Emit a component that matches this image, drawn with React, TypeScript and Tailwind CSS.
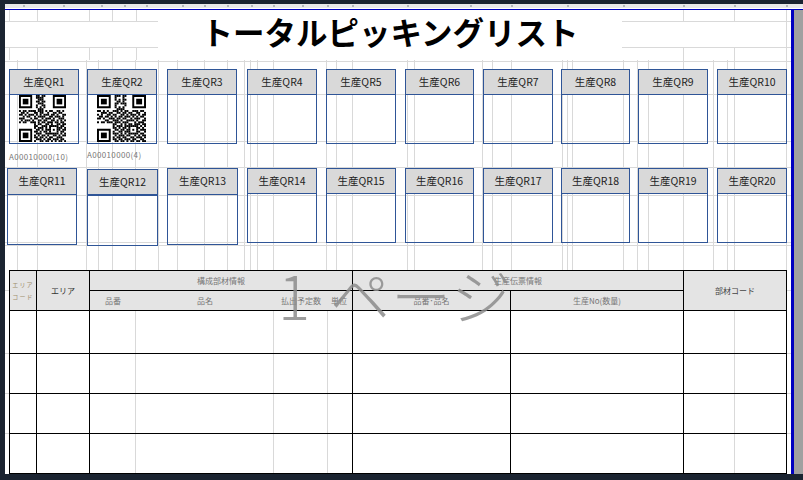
const GRID_TOP_X = [9, 37, 89, 112, 136, 683, 734];
const GRID_UPPER_X = [17, 37, 86, 98, 112, 135, 158, 177, 204, 227, 244, 250, 257, 273, 326, 336, 352, 407, 414, 482, 492, 511, 562, 567, 572, 623, 637, 648, 683, 713, 727, 734, 786];
const GRID_LOWER_X = [135, 273, 327, 734];
const GRID_UPPER_Y = [61, 94, 141, 167, 195, 242, 245];
const GRID_SIDE_Y = [290, 353, 393, 433];
const RULER_TICKS = [23, 63, 101, 124, 146, 182, 204, 227, 251, 273, 302, 327, 352, 407, 470, 511, 567, 623, 683, 734, 786];

const QR1 = [
  "0000000001101100000000000",
  "0000000001111000000000000",
  "0000000000111000000000000",
  "0000000001101100000000000",
  "0000000000111000000000000",
  "0000000001001100000000000",
  "0000000001010100000000000",
  "0000000000111000000000000",
  "1011011110111010110011010",
  "0110100011011001001101100",
  "1101011101010111011010011",
  "0010110010111100110111010",
  "1110001011001011101001110",
  "0101110100110110011010101",
  "1011001110101101110110110",
  "0000000010110011010011011",
  "0000000011001110111110110",
  "0000000010111010100011101",
  "0000000001101011101011011",
  "0000000011010110100010110",
  "0000000001110011111110101",
  "0000000010101101001101011",
  "0000000011011010110011100",
  "0000000001110101101110110",
  "0000000010011011010101101",
];

const QR2 = [
  "0000000001110110000000000",
  "0000000001000100000000000",
  "0000000001010110000000000",
  "0000000000110100000000000",
  "0000000001101110000000000",
  "0000000001000010000000000",
  "0000000001010100000000000",
  "0000000000111100000000000",
  "1101010011101011001110110",
  "0011101100110110110011001",
  "1010011011001101011101011",
  "0110110101011011101010110",
  "1101001110110110010111001",
  "0000110011101001111010011",
  "1011011101110111000101110",
  "0000000011001010110111011",
  "0000000010111011111110101",
  "0000000011010110100011010",
  "0000000001101101101010111",
  "0000000010011011100011001",
  "0000000011101010111110110",
  "0000000001011101100101011",
  "0000000010110110011011101",
  "0000000011011011101100110",
  "0000000001101101011011011",
];

const CARD_COLS = "grid-cols-[78px_80px_80px_79px_79px_78px_78px_77px_79px_69px]";

function Finder({ x, y }: { x: number; y: number }) {
  return (
    <g>
      <path d={`M${x} ${y}h7v7h-7z M${x + 1} ${y + 1}v5h5v-5z`} fillRule="evenodd" fill="#000" />
      <rect x={x + 2} y={y + 2} width="3" height="3" fill="#000" />
    </g>
  );
}

function QrCode({ rows, className }: { rows: string[]; className: string }) {
  return (
    <svg viewBox="0 0 25 25" preserveAspectRatio="none" className={className}>
      <rect width="25" height="25" fill="#fff" />
      {rows.map((row, y) =>
        row.split("").map((c, x) => (c === "1" ? <rect key={`${x}-${y}`} x={x} y={y} width="1.02" height="1.02" fill="#000" /> : null)),
      )}
      <Finder x={0} y={0} />
      <Finder x={18} y={0} />
      <Finder x={0} y={18} />
    </svg>
  );
}

function Card({
  label,
  className = "h-[75px] w-[70px]",
  headerClass = "h-[25px] border-b",
  children,
}: {
  label: string;
  className?: string;
  headerClass?: string;
  children?: React.ReactNode;
}) {
  return (
    <div className={`flex flex-col border border-[#2f5597] ${className}`}>
      <div className={`flex items-center justify-center border-[#2f5597] bg-[#d9d9d9] pb-[1px] text-[10.5px] text-[#222] ${headerClass}`}>
        {label}
      </div>
      {children}
    </div>
  );
}

function Gridlines() {
  return (
    <svg className="absolute left-0 top-0 h-[464px] w-[786px]" viewBox="5 10 786 464" stroke="#d9d9d9" strokeWidth="1">
      {GRID_TOP_X.map((x) => (
        <g key={`t${x}`}>
          <line x1={x + 0.5} x2={x + 0.5} y1="10" y2="21" />
          <line x1={x + 0.5} x2={x + 0.5} y1="47" y2="60" />
        </g>
      ))}
      <line x1="786.5" x2="786.5" y1="10" y2="60" />
      {GRID_UPPER_X.map((x) => (
        <line key={`u${x}`} x1={x + 0.5} x2={x + 0.5} y1="60" y2="270" />
      ))}
      {GRID_LOWER_X.map((x) => (
        <line key={`l${x}`} x1={x + 0.5} x2={x + 0.5} y1="310" y2="474" />
      ))}
      <line x1="5" x2="791" y1="21.5" y2="21.5" />
      <line x1="5" x2="791" y1="47.5" y2="47.5" />
      {GRID_UPPER_Y.map((y) => (
        <line key={`h${y}`} x1="5" x2="791" y1={y + 0.5} y2={y + 0.5} />
      ))}
      {GRID_SIDE_Y.map((y) => (
        <line key={`s${y}`} x1="5" x2="791" y1={y + 0.5} y2={y + 0.5} />
      ))}
    </svg>
  );
}

export default function App() {
  const cell = "border border-black p-0";
  const head = "border border-black bg-[#e4e4e4] p-0 text-center font-normal";
  const small = "text-[8px] leading-none text-[#777]";

  return (
    <div className="flex h-[480px] w-[803px] flex-col overflow-hidden bg-[#1b2431] font-['Noto_Sans_CJK_JP',sans-serif]">
      <div className="mt-[4px] ml-[5px] flex h-[6px] flex-col">
        <svg className="h-[4px] w-[798px] bg-[#e9e9e9]" viewBox="5 0 798 4">
          {RULER_TICKS.map((x) => (
            <rect key={x} x={x} y="1" width="2" height="2" fill="#b4b8bc" />
          ))}
        </svg>
        <div className="h-[1px] bg-white" />
        <div className="h-[1px] bg-[#0000c0]" />
      </div>

      <div className="ml-[5px] flex h-[464px]">
        <div className="relative h-[464px] w-[786px] overflow-hidden bg-white">
          <Gridlines />

          <div className="relative flex h-[464px] flex-col">
            <div className="flex h-[50px] pl-[153px]">
              <h1 className="flex h-[50px] w-[464px] items-center justify-center bg-white pb-[6px] text-[31.5px] font-bold leading-none text-black">
                トータルピッキングリスト
              </h1>
            </div>

            <div className={`mt-[9px] grid pl-[4px] ${CARD_COLS}`}>
              <Card label="生産QR1">
                <QrCode rows={QR1} className="ml-[9px] h-[47px] w-[47px]" />
              </Card>
              <Card label="生産QR2">
                <QrCode rows={QR2} className="ml-[9px] h-[47px] w-[49px]" />
              </Card>
              <Card label="生産QR3" />
              <Card label="生産QR4" />
              <Card label="生産QR5" />
              <Card label="生産QR6" className="h-[75px] w-[69px]" />
              <Card label="生産QR7" />
              <Card label="生産QR8" className="h-[75px] w-[69px]" />
              <Card label="生産QR9" />
              <Card label="生産QR10" />
            </div>

            <div className={`grid h-[25px] pl-[4px] text-[8px] leading-none tracking-[0.35px] text-[#777] ${CARD_COLS}`}>
              <span className="whitespace-nowrap pt-[9px]">A00010000(10)</span>
              <span className="whitespace-nowrap pt-[7px]">A00010000(4)</span>
            </div>

            <div className={`grid items-start pl-[4px] ${CARD_COLS}`}>
              <Card label="生産QR11" className="-ml-[2px] h-[77px] w-[70px]" headerClass="h-[26px] border-b" />
              <Card label="生産QR12" className="mt-[1px] h-[77px] w-[71px]" headerClass="h-[26px] border-b-2" />
              <Card label="生産QR13" className="h-[77px] w-[71px]" headerClass="h-[26px] border-b" />
              <Card label="生産QR14" />
              <Card label="生産QR15" />
              <Card label="生産QR16" className="h-[75px] w-[69px]" />
              <Card label="生産QR17" />
              <Card label="生産QR18" className="h-[75px] w-[69px]" />
              <Card label="生産QR19" />
              <Card label="生産QR20" />
            </div>

            <div className="relative ml-[4px] mt-[24px]">
              <table className="w-[777px] table-fixed border-collapse">
                <colgroup>
                  <col className="w-[27px]" />
                  <col className="w-[53px]" />
                  <col className="w-[263px]" />
                  <col className="w-[158px]" />
                  <col className="w-[173px]" />
                  <col className="w-[103px]" />
                </colgroup>
                <thead>
                  <tr className="h-[20px]">
                    <th rowSpan={2} className={`${head} whitespace-nowrap text-[6px] leading-[12px] tracking-[1.2px] text-[#a08d6a]`}>
                      エリア
                      <br />
                      コード
                    </th>
                    <th rowSpan={2} className={`${head} text-[8px] leading-none text-[#333]`}>
                      エリア
                    </th>
                    <th className={`${head} ${small}`}>構成部材情報</th>
                    <th colSpan={2} className={`${head} ${small}`}>
                      生産伝票情報
                    </th>
                    <th rowSpan={2} className={`${head} text-[8px] leading-none text-[#444]`}>
                      部材コード
                    </th>
                  </tr>
                  <tr className="h-[20px]">
                    <th className={`${head} ${small}`}>
                      <div className="flex pl-[15px]">
                        <span className="w-[92px] text-left">品番</span>
                        <span className="w-[84px] text-left">品名</span>
                        <span className="w-[50px] text-left">払出予定数</span>
                        <span>単位</span>
                      </div>
                    </th>
                    <th className={`${head} ${small}`}>品番･品名</th>
                    <th className={`${head} ${small}`}>生産No(数量)</th>
                  </tr>
                </thead>
                <tbody>
                  <tr className="h-[43px]">
                    {[0, 1, 2, 3, 4, 5].map((i) => (
                      <td key={i} className={cell} />
                    ))}
                  </tr>
                  <tr className="h-[40px]">
                    {[0, 1, 2, 3, 4, 5].map((i) => (
                      <td key={i} className={cell} />
                    ))}
                  </tr>
                  <tr className="h-[40px]">
                    {[0, 1, 2, 3, 4, 5].map((i) => (
                      <td key={i} className={cell} />
                    ))}
                  </tr>
                  <tr className="h-[40px]">
                    {[0, 1, 2, 3, 4, 5].map((i) => (
                      <td key={i} className={cell} />
                    ))}
                  </tr>
                </tbody>
              </table>
              <div className="absolute left-[269px] top-[-12px] whitespace-nowrap text-[60px] font-light leading-[72px] text-[#8c8c8c]/85">
                1<span className="ml-[20px] tracking-[1px]">ページ</span>
              </div>
            </div>
          </div>
        </div>
        <div className="h-[464px] w-[3px] bg-[#0000c0]" />
        <div className="h-[464px] w-[9px] bg-[#a0a0a0]" />
      </div>
    </div>
  );
}
